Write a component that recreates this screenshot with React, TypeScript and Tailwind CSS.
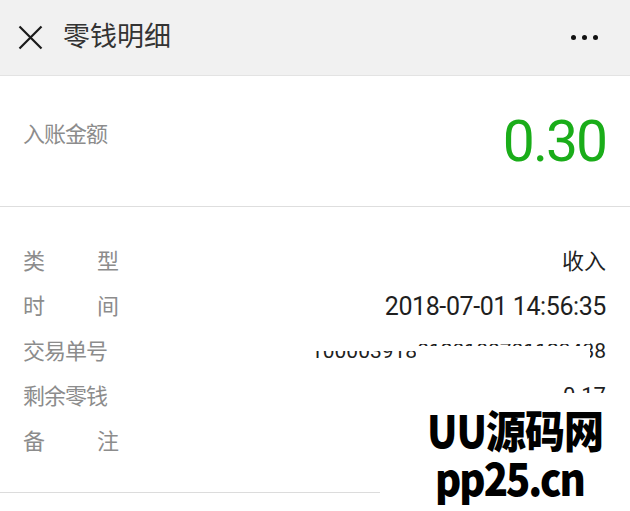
import React from "react";

const cjk = '"Roboto", "Noto Sans CJK SC", sans-serif';

function Row({ label, value, spread, children }: { label: string; value?: string; spread?: boolean; children?: React.ReactNode }) {
  return (
    <div className="flex h-[45px] items-center justify-between">
      {spread ? (
        <div className="flex w-[96px] justify-between text-[22px] text-[#8c8c8c]">
          <span>{label[0]}</span>
          <span>{label[1]}</span>
        </div>
      ) : (
        <div className="text-[22px] tracking-[-1px] text-[#8c8c8c]">{label}</div>
      )}
      {children ?? (value ? <div className="text-[22px] text-[#1f1f1f]">{value}</div> : null)}
    </div>
  );
}

export default function App() {
  return (
    <div className="relative h-[511px] w-[630px] overflow-hidden bg-white" style={{ fontFamily: cjk }}>
      <div className="flex h-[76px] items-center justify-between border-b border-[#e3e3e3] bg-[#f1f1f1] pl-[18px] pr-[32px]">
        <div className="flex items-center gap-[20px]">
          <svg width="25" height="25" viewBox="0 0 25 25" fill="none" stroke="#1a1a1a" strokeWidth="2.2">
            <path d="M1.5 1.5 L23.5 23.5 M23.5 1.5 L1.5 23.5" />
          </svg>
          <span className="text-[27px] text-[#333]">零钱明细</span>
        </div>
        <div className="flex items-center gap-[6px]">
          <span className="h-[5px] w-[5px] rounded-full bg-[#111]" />
          <span className="h-[5px] w-[5px] rounded-full bg-[#111]" />
          <span className="h-[5px] w-[5px] rounded-full bg-[#111]" />
        </div>
      </div>

      <div className="flex h-[131px] items-center justify-between border-b border-[#dedede] pl-[23px] pr-[24px]">
        <span className="-mt-[14px] text-[22px] tracking-[-1px] text-[#8c8c8c]">入账金额</span>
        <span className="text-[57px] leading-none tracking-[-2px] text-[#1aad19]" style={{ fontFamily: "Roboto, sans-serif" }}>0.30</span>
      </div>

      <div className="border-b border-[#dcdcdc] pb-[28px] pl-[23px] pr-[24px] pt-[32px]">
        <Row label="类型" value="收入" spread />
        <Row label="时间" spread>
          <div className="text-[25px] tracking-[-0.4px] text-[#1f1f1f]">2018-07-01 14:56:35</div>
        </Row>
        <Row label="交易单号">
          <div className="relative w-[300px] text-right text-[21px] text-[#1f1f1f]">
            <span>1000039180120180701123438</span>
            <span className="absolute left-0 top-0 h-[15px] w-[110px] bg-white" />
            <span className="absolute bottom-0 left-[110px] right-[16px] top-[10px] bg-white" />
            <span className="absolute left-[110px] right-[16px] top-0 h-[8px] bg-white" />
          </div>
        </Row>
        <Row label="剩余零钱">
          <div className="mb-[12px] h-[8px] overflow-hidden text-[22px] leading-[22px] text-[#1f1f1f]">
            <div className="-mt-[2px]">0.17</div>
          </div>
        </Row>
        <Row label="备注" spread />
      </div>

      <div className="absolute bottom-0 left-[380px] right-0 top-[393px] flex flex-col items-end gap-[8px] bg-white pr-[27px] pt-[14px]">
        <div className="origin-top scale-y-[1.12] text-[40px] font-black leading-none tracking-[-1px] text-black" style={{ fontFamily: '"Noto Sans CJK SC", sans-serif' }}>UU源码网</div>
        <div className="w-[168px] origin-top scale-y-[1.12] text-[40px] font-black leading-none tracking-[-2px] text-black" style={{ fontFamily: '"Noto Sans CJK SC", sans-serif' }}>pp25.cn</div>
      </div>
    </div>
  );
}
